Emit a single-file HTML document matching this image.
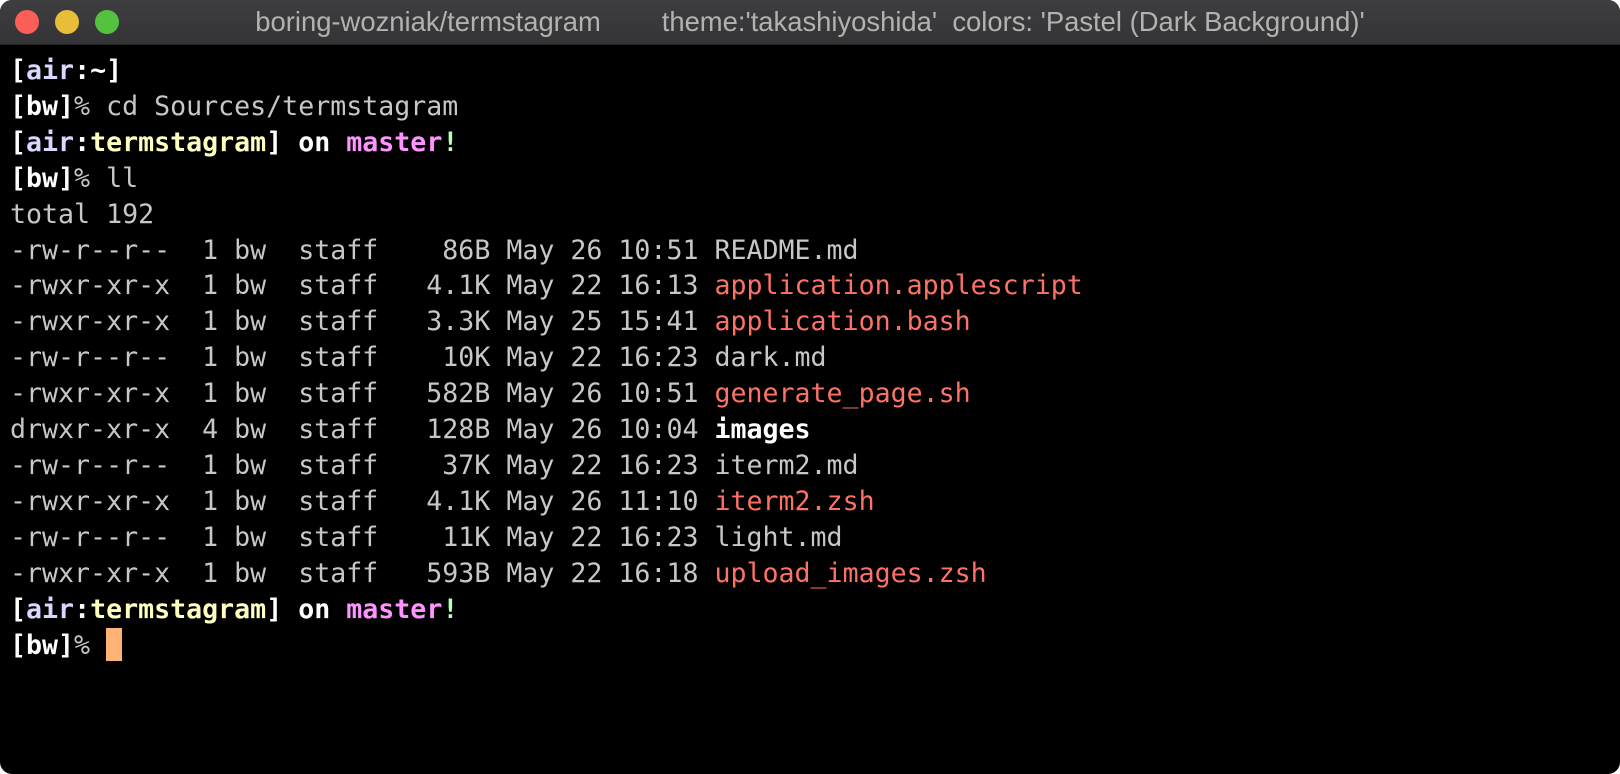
<!DOCTYPE html>
<html><head><meta charset="utf-8"><style>
html,body{margin:0;padding:0;background:#fff;width:1620px;height:774px;overflow:hidden}
.win{position:absolute;left:0;top:0;width:1620px;height:774px;background:#000;border-radius:12px;overflow:hidden}
.tb{position:absolute;left:0;top:0;width:1620px;height:44px;background:linear-gradient(#3e3e40,#343436);border-bottom:1px solid #222}
.dot{position:absolute;top:10px;width:24px;height:24px;border-radius:50%}
.title{position:absolute;left:0;right:0;top:6px;text-align:center;color:#b2b2b2;font:27.4px "Liberation Sans",sans-serif;white-space:pre;line-height:32px}
pre{position:absolute;left:10px;top:53px;margin:0;font-family:"DejaVu Sans Mono","Liberation Mono",monospace;font-size:26.6px;line-height:35.9px;color:#c7c7c7}
.w{color:#fff;font-weight:bold}.l{color:#d8d8ff;font-weight:bold}.y{color:#ffffc0;font-weight:bold}
.m{color:#ff93ff;font-weight:bold}.g{color:#b8ffb8;font-weight:bold}.r{color:#fe7266}
.cur{display:inline-block;width:16px;height:33px;background:#ffb375;vertical-align:-7px}
</style></head><body><div class="win">
<div class="tb"><div class="dot" style="left:15px;background:#fc5f57"></div><div class="dot" style="left:55px;background:#e8bd3a"></div><div class="dot" style="left:95px;background:#53c33f"></div>
<div class="title">boring-wozniak/termstagram        theme:'takashiyoshida'  colors: 'Pastel (Dark Background)'</div></div>
<pre><span class="w">[</span><span class="l">air</span><span class="w">:~]</span>
<span class="w">[bw]</span>% cd Sources/termstagram
<span class="w">[</span><span class="l">air</span><span class="w">:</span><span class="y">termstagram</span><span class="w">] on </span><span class="m">master</span><span class="g">!</span>
<span class="w">[bw]</span>% ll
total 192
-rw-r--r--  1 bw  staff    86B May 26 10:51 README.md
-rwxr-xr-x  1 bw  staff   4.1K May 22 16:13 <span class="r">application.applescript</span>
-rwxr-xr-x  1 bw  staff   3.3K May 25 15:41 <span class="r">application.bash</span>
-rw-r--r--  1 bw  staff    10K May 22 16:23 dark.md
-rwxr-xr-x  1 bw  staff   582B May 26 10:51 <span class="r">generate_page.sh</span>
drwxr-xr-x  4 bw  staff   128B May 26 10:04 <span class="w">images</span>
-rw-r--r--  1 bw  staff    37K May 22 16:23 iterm2.md
-rwxr-xr-x  1 bw  staff   4.1K May 26 11:10 <span class="r">iterm2.zsh</span>
-rw-r--r--  1 bw  staff    11K May 22 16:23 light.md
-rwxr-xr-x  1 bw  staff   593B May 22 16:18 <span class="r">upload_images.zsh</span>
<span class="w">[</span><span class="l">air</span><span class="w">:</span><span class="y">termstagram</span><span class="w">] on </span><span class="m">master</span><span class="g">!</span>
<span class="w">[bw]</span>% <span class="cur"></span></pre>
</div></body></html>
